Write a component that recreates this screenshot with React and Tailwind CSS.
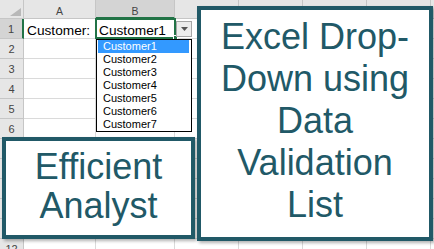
import React from "react";

const columns = ["A", "B", "C", "D", "E", "F", "G"];
const rows = [1, 2, 3, 4, 5, 6, 7, 8, 9, 10, 11, 12];
const customers = ["Customer1", "Customer2", "Customer3", "Customer4", "Customer5", "Customer6", "Customer7"];

const HeaderCell = ({ label, selected }) => (
  <div
    className={
      "h-[19px] flex justify-center pt-[5px] leading-[12px] border-r border-b border-[#c6c6c6] text-[10.5px] text-[#444] " +
      (selected ? "bg-[#d4d4d4] border-b-2 border-b-[#217346]" : "bg-[#e6e6e6]")
    }
  >
    {label}
  </div>
);

const RowHeader = ({ n, selected }) => (
  <div
    className={
      "h-[20px] flex justify-center pt-[4px] leading-[13px] border-b border-[#c6c6c6] text-[11px] text-[#444] " +
      (selected ? "bg-[#d4d4d4] border-r-2 border-r-[#217346]" : "bg-[#e6e6e6] border-r")
    }
  >
    {n}
  </div>
);

const Cell = ({ children }) => (
  <div className="h-[20px] flex items-end pl-[3px] pb-[1px] border-r border-b border-[#dadada] text-[13.7px] leading-[13px] text-black whitespace-nowrap">
    {children}
  </div>
);

export default function App() {
  return (
    <div className="relative w-[434px] h-[249px] overflow-hidden bg-white font-['Liberation_Sans',Arial,sans-serif]">
      {/* sheet */}
      <div className="grid grid-cols-[24px_72px_79px_64px_64px_64px_64px_64px]">
        <div className="h-[19px] flex items-end justify-end pr-[2px] pb-[2px] bg-[#e6e6e6] border-r border-b border-[#c6c6c6]">
          <svg width="11" height="8" viewBox="0 0 11 8">
            <polygon points="0,8 11,8 11,0" fill="#b8b8b8" />
          </svg>
        </div>
        {columns.map((c) => (
          <HeaderCell key={c} label={c} selected={c === "B"} />
        ))}
        {rows.map((r) => (
          <React.Fragment key={r}>
            <RowHeader n={r} selected={r === 1} />
            {columns.map((c) => (
              <Cell key={c}>
                {r === 1 && c === "A" ? "Customer:" : r === 1 && c === "B" ? "Customer1" : null}
              </Cell>
            ))}
          </React.Fragment>
        ))}
      </div>

      {/* active cell B1 */}
      <div className="absolute left-[95px] top-[18px] w-[81px] h-[21px] border-2 border-[#217346]" />
      <div className="absolute left-[173px] top-[35px] w-[5px] h-[5px] bg-[#217346] border border-white" />

      {/* dropdown button */}
      <div className="absolute left-[176px] top-[21px] w-[16px] h-[16px] bg-[#ececec] border border-[#a6a6a6] flex items-center justify-center">
        <svg width="7" height="4" viewBox="0 0 7 4">
          <polygon points="0,0 7,0 3.5,4" fill="#555" />
        </svg>
      </div>

      {/* dropdown list */}
      <div className="absolute left-[96px] top-[39px] w-[96px] h-[93px] bg-white border border-black p-[1px] pt-0 pr-[2px]">
        {customers.map((name, i) => (
          <div
            key={name}
            className={
              "h-[13px] pl-[5px] text-[11px] leading-[13px] " +
              (i === 0 ? "bg-[#3399ff] text-white" : "text-black")
            }
          >
            {name}
          </div>
        ))}
      </div>

      {/* text boxes */}
      <div className="absolute left-[2px] top-[137px] w-[193px] h-[102px] bg-white border-4 border-[#215967] shadow-[2px_2px_3px_rgba(0,0,0,0.3)] pt-[6px] text-center text-[36px] leading-[39px] text-[#215967]">
        <p>Efficient</p>
        <p>Analyst</p>
      </div>
      <div className="absolute left-[197px] top-[6px] w-[236px] h-[235px] bg-white border-4 border-[#215967] shadow-[2px_2px_3px_rgba(0,0,0,0.3)] pt-[6px] text-center text-[36px] leading-[42px] text-[#215967]">
        <p>Excel Drop-</p>
        <p>Down using</p>
        <p>Data</p>
        <p>Validation</p>
        <p>List</p>
      </div>
    </div>
  );
}
